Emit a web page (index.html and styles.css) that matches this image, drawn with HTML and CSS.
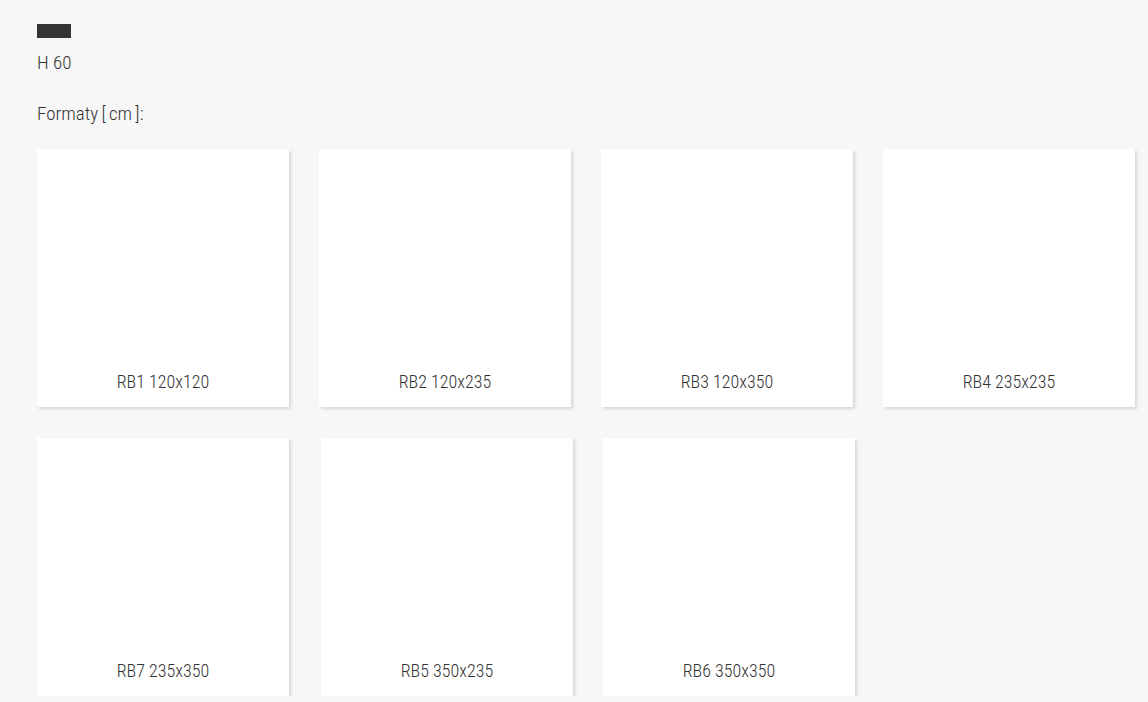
FILE: index.html
```html
<!DOCTYPE html>
<html lang="pl">
<head>
    <meta charset="UTF-8">
    <meta name="viewport" content="width=device-width, initial-scale=1.0">
    <title>H 60 - Formaty</title>
    <link rel="stylesheet" href="styles.css">
</head>
<body>
    <div class="produkt">
        <div class="kolor"></div>
        <p class="nazwa">H 60</p>
        <p class="naglowek">Formaty [ cm ]:</p>
        <div class="formaty">
            <div class="format"><span class="opis">RB1 120x120</span></div>
            <div class="format"><span class="opis">RB2 120x235</span></div>
            <div class="format"><span class="opis">RB3 120x350</span></div>
            <div class="format"><span class="opis">RB4 235x235</span></div>
            <div class="format"><span class="opis">RB7 235x350</span></div>
            <div class="format drugi"><span class="opis">RB5 350x235</span></div>
            <div class="format drugi"><span class="opis">RB6 350x350</span></div>
        </div>
    </div>
</body>
</html>
```

FILE: styles.css
```css
body {
    margin: 0;
    background-color: #f7f7f7;
    font-family: "Liberation Sans Narrow", "Roboto Condensed", Roboto, sans-serif;
    font-weight: 300;
    color: #333;
}
.produkt {
    padding: 24px 0 0 37px;
}
.kolor {
    width: 34px;
    height: 14px;
    background-color: #333;
}
.nazwa, .naglowek {
    margin: 0;
    font-size: 19px;
    line-height: 24px;
}
.nazwa {
    margin-top: 13px;
}
.naglowek {
    margin-top: 27px;
    word-spacing: -1px;
}
.formaty {
    display: flex;
    flex-wrap: wrap;
    width: 1100px;
    column-gap: 30px;
    row-gap: 31px;
    margin-top: 23px;
}
.format {
    width: 252px;
    height: 258px;
    background-color: #fff;
    box-shadow: 2px 2px 3px rgba(0,0,0,0.13);
    display: flex;
    flex-direction: column;
    justify-content: flex-end;
    align-items: center;
}
.format.drugi {
    position: relative;
    left: 2px;
}
.opis {
    font-size: 18px;
    line-height: 24px;
    padding-bottom: 13px;
}
```
